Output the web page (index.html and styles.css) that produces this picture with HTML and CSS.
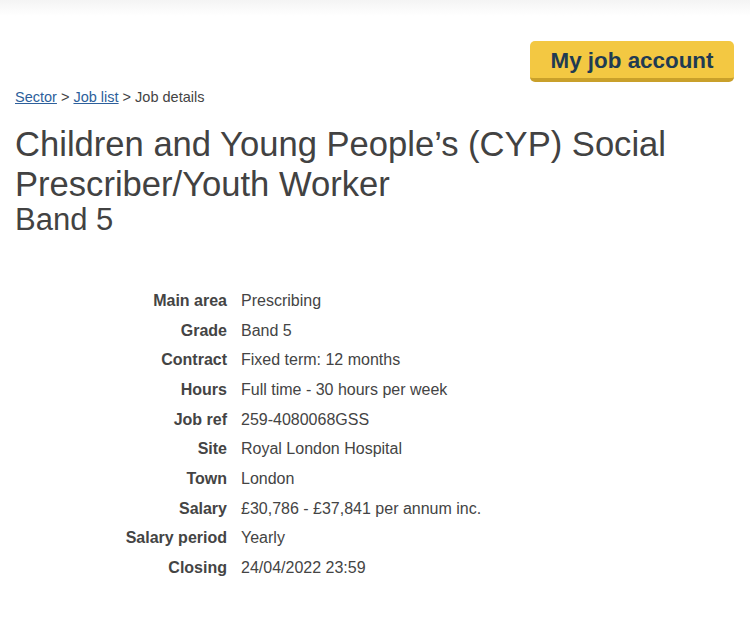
FILE: index.html
```html
<!DOCTYPE html>
<html lang="en">
<head>
<meta charset="utf-8">
<title>Job details</title>
<link rel="stylesheet" href="styles.css">
</head>
<body>
<div class="topshade"></div>
<div class="page">
  <div class="actions">
    <a class="account-btn" href="#">My job account</a>
  </div>
  <nav class="crumbs">
    <a href="#">Sector</a> &gt; <a href="#">Job list</a> &gt; Job details
  </nav>
  <h1 class="title">Children and Young People’s (CYP) Social Prescriber/Youth Worker</h1>
  <h2 class="band">Band 5</h2>
  <dl class="details">
    <div class="row"><dt>Main area</dt><dd>Prescribing</dd></div>
    <div class="row"><dt>Grade</dt><dd>Band 5</dd></div>
    <div class="row"><dt>Contract</dt><dd>Fixed term: 12 months</dd></div>
    <div class="row"><dt>Hours</dt><dd>Full time - 30 hours per week</dd></div>
    <div class="row"><dt>Job ref</dt><dd>259-4080068GSS</dd></div>
    <div class="row"><dt>Site</dt><dd>Royal London Hospital</dd></div>
    <div class="row"><dt>Town</dt><dd>London</dd></div>
    <div class="row"><dt>Salary</dt><dd>£30,786 - £37,841 per annum inc.</dd></div>
    <div class="row"><dt>Salary period</dt><dd>Yearly</dd></div>
    <div class="row"><dt>Closing</dt><dd>24/04/2022 23:59</dd></div>
  </dl>
</div>
</body>
</html>
```
FILE: styles.css
```css
* { box-sizing: border-box; }
html, body { margin: 0; padding: 0; background: #fff; }
body {
  font-family: "Liberation Sans", Arial, sans-serif;
  color: #424242;
}
.topshade {
  height: 16px;
  background: linear-gradient(#f4f4f4, #ffffff);
}
.page {
  padding: 0 15px;
}
.actions {
  display: flex;
  justify-content: flex-end;
  padding-top: 25px;
  padding-right: 1px;
}
.account-btn {
  display: block;
  width: 204px;
  height: 41px;
  line-height: 39px;
  text-align: center;
  background: #f3c842;
  border-bottom: 4px solid #c9a02a;
  border-radius: 5px;
  color: #1f3b52;
  font-weight: bold;
  font-size: 22.4px;
  text-decoration: none;
}
.crumbs {
  font-size: 14.5px;
  margin-top: 7px;
  color: #444;
}
.crumbs a {
  color: #2d5f9b;
  text-decoration: underline;
}
.title {
  margin: 19px 0 0;
  font-size: 34.6px;
  font-weight: normal;
  line-height: 40px;
  color: #424242;
  max-width: 700px;
}
.band {
  margin: -2px 0 0;
  font-size: 31px;
  font-weight: normal;
  line-height: 36px;
  color: #424242;
}
.details {
  margin: 48px 0 0;
  display: flex;
  flex-direction: column;
}
.row {
  display: grid;
  grid-template-columns: 212px 1fr;
  column-gap: 14px;
  height: 29.7px;
  align-items: center;
  font-size: 16px;
}
.row dt {
  text-align: right;
  font-weight: bold;
  color: #444;
}
.row dd {
  margin: 0;
  color: #444;
}
```
